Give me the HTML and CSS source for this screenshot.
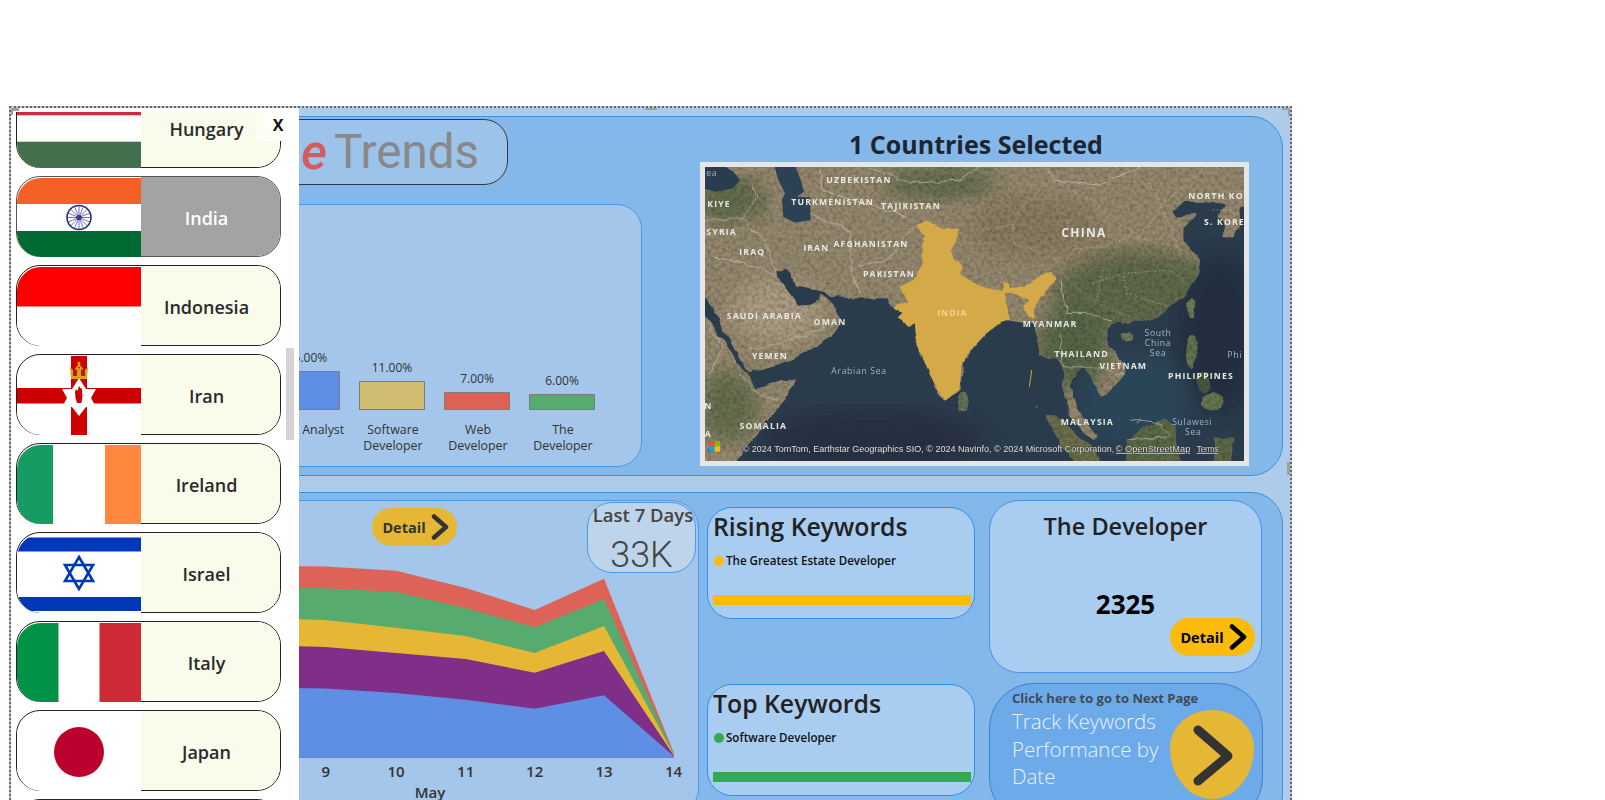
FILE: index.html
```html
<!DOCTYPE html>
<html lang="en">

<head>
    <meta charset="UTF-8">
    <meta name="viewport" content="width=device-width, initial-scale=1.0">
    <title>Google Trends Dashboard</title>
    <link rel="stylesheet" href="styles.css">
</head>

<body>

    <div class="frame">
        <span class="handle handle-top"></span>
        <span class="handle handle-right"></span>
        <span class="handle handle-left"></span>
        <span class="corner"></span>

        <section class="panel panel-upper">
            <div class="left-col">
                <div class="logo"><span class="logo-e">e</span><span class="logo-word">Trends</span></div>
                <div class="share-card">
                    <div class="share-col">
                        <div class="share-value">15.00%</div>
                        <div class="share-bar bar-blue" style="height: 39px"></div>
                        <div class="share-name">Data Analyst</div>
                    </div>
                    <div class="share-col">
                        <div class="share-value">11.00%</div>
                        <div class="share-bar bar-sand" style="height: 29px"></div>
                        <div class="share-name">Software Developer</div>
                    </div>
                    <div class="share-col">
                        <div class="share-value">7.00%</div>
                        <div class="share-bar bar-red" style="height: 18px"></div>
                        <div class="share-name">Web Developer</div>
                    </div>
                    <div class="share-col">
                        <div class="share-value">6.00%</div>
                        <div class="share-bar bar-green" style="height: 16px"></div>
                        <div class="share-name">The<br>Developer</div>
                    </div>
                </div>
            </div>
            <div class="right-col">
                <h1 class="map-title">1 Countries Selected</h1>
                <div class="map-frame">
                    <svg class="map" viewBox="15 21 1617 882" width="539" height="294">
                        <defs>
                            <polygon id="land-main" points="-20,-10 1670,-10 1670,125 1620,140 1625,190 1600,232 1565,232 1572,195 1555,165 1575,140 1540,125 1490,125 1450,125 1420,150 1435,170 1490,165 1450,205 1450,240 1500,300 1495,340 1460,400 1410,440 1370,470 1290,490 1255,480 1220,510 1225,560 1270,610 1275,650 1240,680 1205,710 1188,680 1155,620 1130,640 1110,680 1130,745 1190,835 1175,840 1110,770 1095,700 1090,640 1070,600 1020,585 1005,490 935,480 905,485 860,520 810,572 785,615 778,690 735,722 712,690 680,620 650,555 645,490 625,500 595,470 610,458 578,442 560,415 455,415 395,410 375,395 340,388 295,375 272,350 255,322 228,335 245,365 275,405 295,435 340,430 365,405 385,420 430,480 395,530 330,570 280,600 150,640 120,590 80,530 50,460 -20,370" />
                            <polygon id="land-africa" points="-20,420 60,530 115,610 150,650 165,685 225,670 285,655 270,690 230,750 190,800 130,870 100,930 -20,930" />
                            <clipPath id="land-clip">
                                <use href="#land-main" />
                                <use href="#land-africa" />
                            </clipPath>
                            <filter id="grain" filterUnits="userSpaceOnUse" x="-30" y="-30" width="1720" height="980">
                                <feTurbulence type="fractalNoise" baseFrequency="0.02" numOctaves="3" seed="3" result="wobble" />
                                <feDisplacementMap in="SourceGraphic" in2="wobble" scale="22" xChannelSelector="R" yChannelSelector="G" result="rough" />
                                <feTurbulence type="fractalNoise" baseFrequency="0.09" numOctaves="5" seed="7" />
                                <feColorMatrix type="matrix" values="0 0 0 0 0.45  0 0 0 0 0.43  0 0 0 0 0.37  1.6 0 0 0 -0.55" />
                                <feComposite in2="rough" operator="in" result="speck" />
                                <feBlend in="speck" in2="rough" mode="multiply" />
                            </filter>
                            <filter id="rough-line" filterUnits="userSpaceOnUse" x="-30" y="-30" width="1720" height="980">
                                <feTurbulence type="fractalNoise" baseFrequency="0.03" numOctaves="3" seed="11" result="wobble" />
                                <feDisplacementMap in="SourceGraphic" in2="wobble" scale="20" xChannelSelector="R" yChannelSelector="G" />
                                <feGaussianBlur stdDeviation="0.8" />
                            </filter>
                            <filter id="rough-india" filterUnits="userSpaceOnUse" x="-30" y="-30" width="1720" height="980">
                                <feTurbulence type="fractalNoise" baseFrequency="0.05" numOctaves="3" seed="5" result="wobble" />
                                <feDisplacementMap in="SourceGraphic" in2="wobble" scale="9" xChannelSelector="R" yChannelSelector="G" />
                            </filter>
                            <filter id="soft"><feGaussianBlur stdDeviation="30" /></filter>
                        </defs>

                        <rect x="15" y="21" width="1617" height="882" fill="#2a3b4c" />
                        <ellipse cx="1560" cy="520" rx="130" ry="240" fill="#232d40" filter="url(#soft)" />
                        <ellipse cx="520" cy="840" rx="330" ry="90" fill="#262f42" filter="url(#soft)" />
                        <ellipse cx="1300" cy="720" rx="170" ry="140" fill="#2b4456" filter="url(#soft)" />

                        <g filter="url(#grain)">
                            <use href="#land-main" fill="#95886f" />
                            <use href="#land-africa" fill="#968a72" />
                            <g clip-path="url(#land-clip)">
                                <ellipse cx="1320" cy="400" rx="260" ry="130" fill="#606b4c" filter="url(#soft)" />
                                <ellipse cx="1120" cy="560" rx="110" ry="130" fill="#566746" filter="url(#soft)" />
                                <ellipse cx="85" cy="740" rx="90" ry="110" fill="#667050" filter="url(#soft)" />
                                <ellipse cx="90" cy="120" rx="110" ry="70" fill="#626c4e" filter="url(#soft)" />
                                <ellipse cx="720" cy="70" rx="170" ry="50" fill="#626d50" filter="url(#soft)" />
                                <ellipse cx="230" cy="450" rx="140" ry="100" fill="#ac9c84" filter="url(#soft)" />
                                <ellipse cx="1000" cy="200" rx="190" ry="90" fill="#8a7b62" filter="url(#soft)" />
                            </g>
                            <polygon fill="#6a6f4c" points="1035,768 1070,770 1140,830 1190,880 1210,930 1140,930 1090,860" />
                            <polygon fill="#5c6b47" points="1280,850 1320,810 1390,780 1430,800 1425,850 1450,930 1280,930" />
                            <polygon fill="#5c6b47" points="1540,835 1600,840 1590,930 1550,930" />
                            <ellipse cx="1280" cy="527" rx="20" ry="14" fill="#6e7a55" />
                            <ellipse cx="1473" cy="445" rx="11" ry="30" fill="#6e7a55" />
                            <ellipse cx="1475" cy="575" rx="18" ry="46" fill="#66754e" />
                            <ellipse cx="1510" cy="665" rx="22" ry="32" fill="#47583f" />
                            <ellipse cx="1535" cy="725" rx="32" ry="28" fill="#66754e" />
                            <ellipse cx="788" cy="727" rx="17" ry="32" fill="#68735c" />
                        </g>

                        <polygon fill="#2a3d50" points="5,10 60,10 100,35 120,60 100,85 50,95 5,85" />
                        <polygon fill="#2b4254" points="222,15 285,15 300,55 312,95 290,110 330,112 332,180 285,188 250,170 246,120 255,100 235,60" />

                        <g class="borders" filter="url(#rough-line)">
                            <polyline points="15,180 130,175 170,110 160,80" />
                            <polyline points="130,180 190,240 230,330" />
                            <polyline points="40,290 130,310 225,345" />
                            <polyline points="360,21 365,90 460,120 620,170" />
                            <polyline points="330,160 450,210 450,330 480,400" />
                            <polyline points="470,320 560,300 640,200" />
                            <polyline points="150,570 300,530 370,500" />
                            <polyline points="120,640 160,690 235,720" />
                            <polyline points="500,21 640,70 780,60 840,21" />
                            <polyline points="15,470 70,560 30,640" />
                            <polyline points="1040,21 1060,60 1190,75 1320,25" />
                            <polyline points="1080,360 1100,460 1160,460 1230,480" />
                            <polyline points="1080,520 1090,620 1160,620 1270,640" />
                            <polyline points="1290,780 1380,790 1410,830 1280,840" />
                        </g>
                        <g class="provinces" filter="url(#rough-india)">
                            <polyline points="810,215 940,195 940,250 1060,290 1095,350 1150,400 1210,440 1290,470" />
                            <polyline points="940,195 960,150 1050,60 1190,130 1220,170 1320,230 1410,110 1510,30" />
                            <polyline points="1090,270 1210,260 1290,230 1430,260 1490,300" />
                            <polyline points="1180,370 1270,340 1410,330 1460,370" />
                            <polyline points="1270,340 1280,400 1410,440" />
                            <polyline points="1210,320 1190,420" />
                            <polyline points="1350,70 1410,200 1450,300" />
                            <polyline points="1120,270 1100,180" />
                            <polyline points="1540,150 1600,150" />
                        </g>

                        <polygon class="india" filter="url(#rough-india)" points="648,195 680,182 705,195 730,208 778,205 770,240 752,272 762,298 790,318 780,338 812,365 860,385 910,392 915,365 925,372 930,385 975,378 1025,345 1050,335 1072,358 1050,378 1022,410 1005,440 1000,478 985,468 970,440 988,420 960,408 935,398 915,400 918,425 930,478 905,485 860,520 810,572 785,615 778,690 735,722 712,690 680,620 650,555 645,490 625,500 595,470 608,458 580,445 590,432 625,428 598,380 640,360 668,310 665,260 672,228" />
                        <polyline class="andaman" points="995,630 992,655 988,680" />
                        <polyline class="andaman" points="1008,738 1012,742" />

                        <g class="map-labels">
                            <text x="477" y="62">UZBEKISTAN</text>
                            <text x="57" y="134">KIYE</text>
                            <text x="398" y="128">TURKMENISTAN</text>
                            <text x="633" y="140">TAJIKISTAN</text>
                            <text x="65" y="218">SYRIA</text>
                            <text x="157" y="278">IRAQ</text>
                            <text x="349" y="265">IRAN</text>
                            <text x="513" y="255">AFGHANISTAN</text>
                            <text x="567" y="344">PAKISTAN</text>
                            <text x="193" y="470">SAUDI ARABIA</text>
                            <text x="390" y="488">OMAN</text>
                            <text x="210" y="590">YEMEN</text>
                            <text x="25" y="740">N</text>
                            <text x="25" y="825">A</text>
                            <text x="190" y="800">SOMALIA</text>
                            <text class="label-big" x="1152" y="221">CHINA</text>
                            <text class="label-start" x="1465" y="110">NORTH KO</text>
                            <text class="label-start" x="1512" y="188">S. KORE</text>
                            <text x="1050" y="493">MYANMAR</text>
                            <text x="1145" y="584">THAILAND</text>
                            <text x="1270" y="620">VIETNAM</text>
                            <text x="1503" y="650">PHILIPPINES</text>
                            <text x="1162" y="788">MALAYSIA</text>
                        </g>
                        <g class="map-seas">
                            <text x="35" y="40">ea</text>
                            <text x="477" y="635">Arabian Sea</text>
                            <text x="1374" y="521">South</text>
                            <text x="1374" y="551">China</text>
                            <text x="1374" y="581">Sea</text>
                            <text class="label-start" x="1582" y="587">Phi</text>
                            <text x="1477" y="788">Sulawesi</text>
                            <text x="1480" y="818">Sea</text>
                        </g>
                        <text class="india-label" x="757" y="462">INDIA</text>

                        <rect x="28" y="843" width="16" height="16" fill="#f25022" />
                        <rect x="44" y="843" width="16" height="16" fill="#7fba00" />
                        <rect x="28" y="859" width="16" height="16" fill="#00a4ef" />
                        <rect x="44" y="859" width="16" height="16" fill="#ffb900" />
                        <text class="attribution" x="128" y="868" textLength="1115" lengthAdjust="spacingAndGlyphs">© 2024 TomTom, Earthstar Geographics SIO, © 2024 NavInfo, © 2024 Microsoft Corporation,</text>
                        <text class="attribution attribution-link" x="1247" y="868" textLength="224" lengthAdjust="spacingAndGlyphs">© OpenStreetMap</text>
                        <text class="attribution attribution-link" x="1490" y="868" textLength="65" lengthAdjust="spacingAndGlyphs">Terms</text>
                    </svg>
                </div>
            </div>
        </section>

        <section class="panel panel-lower">
            <div class="trend-card">
                <svg class="trend-chart" viewBox="22 556 676 250" width="676" height="250">
                    <polygon fill="#dd6257" points="290,566 325.7,566.5 396,570.7 465.7,588 534.7,610 604,578.7 673.5,752 673.5,757.7 290,757.7" />
                    <polygon fill="#57ab6f" points="290,588 325.7,588.3 396,592 465.7,608 534.7,627.3 604,599 673.5,753 673.5,757.7 290,757.7" />
                    <polygon fill="#e6b735" points="290,619 325.7,620 396,627.7 465.7,636 534.7,653 604,626 673.5,754 673.5,757.7 290,757.7" />
                    <polygon fill="#7f2f88" points="290,646 325.7,647 396,653 465.7,659 534.7,672.7 604,651 673.5,755 673.5,757.7 290,757.7" />
                    <polygon fill="#5f8fe4" points="290,688 325.7,688.5 396,693 465.7,699.7 534.7,708.7 604,695.3 673.5,756 673.5,757.7 290,757.7" />
                    <g class="trend-axis">
                        <text x="325.7" y="777">9</text>
                        <text x="396" y="777">10</text>
                        <text x="465.7" y="777">11</text>
                        <text x="534.7" y="777">12</text>
                        <text x="604" y="777">13</text>
                        <text x="673.5" y="777">14</text>
                        <text x="430" y="798">May</text>
                    </g>
                </svg>
                <a class="detail detail-yellow detail-trend">Detail
                    <svg class="chevron" viewBox="0 0 18 26" width="18" height="26">
                        <polyline points="3,2.5 15,13 3,23.5" />
                    </svg>
                </a>
                <div class="days-card">
                    <div class="days-label">Last 7 Days</div>
                    <div class="days-value">33K</div>
                </div>
            </div>

            <div class="keyword-col">
                <div class="keyword-card">
                    <h2 class="card-title">Rising Keywords</h2>
                    <div class="legend"><span class="dot dot-amber"></span>The Greatest Estate Developer</div>
                    <div class="keyword-bar bar-amber"></div>
                </div>
                <div class="keyword-card">
                    <h2 class="card-title">Top Keywords</h2>
                    <div class="legend"><span class="dot dot-leaf"></span>Software Developer</div>
                    <div class="keyword-bar bar-leaf"></div>
                </div>
            </div>

            <div class="action-col">
                <div class="developer-card">
                    <h2 class="card-title developer-title">The Developer</h2>
                    <div class="developer-count">2325</div>
                    <a class="detail detail-amber">Detail
                        <svg class="chevron chevron-black" viewBox="0 0 18 26" width="18" height="26">
                            <polyline points="3,2.5 15,13 3,23.5" />
                        </svg>
                    </a>
                </div>
                <div class="next-card">
                    <div class="next-hint">Click here to go to Next Page</div>
                    <div class="next-row">
                        <div class="next-text">Track Keywords Performance by Date</div>
                        <div class="next-button">
                            <svg viewBox="0 0 44 64" width="44" height="64">
                                <polyline points="8,7 38,33 8,58" />
                            </svg>
                        </div>
                    </div>
                </div>
            </div>
        </section>

        <aside class="slicer">
            <span class="slicer-corner"></span>
            <div class="slicer-list">
                <div class="country first">
                    <svg class="flag" viewBox="0 0 124 79" preserveAspectRatio="none">
                        <rect width="124" height="79" fill="#fff" />
                        <rect width="124" height="26.3" fill="#cd2a3e" />
                        <rect y="52.7" width="124" height="26.3" fill="#436f4d" />
                    </svg>
                    <div class="country-name">Hungary</div>
                </div>
                <div class="country selected">
                    <svg class="flag" viewBox="0 0 124 79" preserveAspectRatio="none">
                        <rect width="124" height="79" fill="#fff" />
                        <rect width="124" height="26" fill="#f46027" />
                        <rect y="53" width="124" height="26" fill="#006a33" />
                        <circle cx="62" cy="39.5" r="12" fill="#fff" stroke="#2a2a7e" stroke-width="1.6" />
                        <circle cx="62" cy="39.5" r="2.6" fill="#2a2a7e" />
                        <g stroke="#3b3b8c" stroke-width="0.7">
                            <line x1="50" y1="39.5" x2="74" y2="39.5" />
                            <line x1="62" y1="27.5" x2="62" y2="51.5" />
                            <line x1="53.5" y1="31" x2="70.5" y2="48" />
                            <line x1="70.5" y1="31" x2="53.5" y2="48" />
                            <line x1="51" y1="35" x2="73" y2="44" />
                            <line x1="73" y1="35" x2="51" y2="44" />
                            <line x1="57.5" y1="28.5" x2="66.5" y2="50.5" />
                            <line x1="66.5" y1="28.5" x2="57.5" y2="50.5" />
                        </g>
                    </svg>
                    <div class="country-name">India</div>
                </div>
                <div class="country">
                    <svg class="flag" viewBox="0 0 124 79" preserveAspectRatio="none">
                        <rect width="124" height="79" fill="#fff" />
                        <rect width="124" height="39.5" fill="#ff0000" />
                    </svg>
                    <div class="country-name">Indonesia</div>
                </div>
                <div class="country">
                    <svg class="flag" viewBox="0 0 124 79" preserveAspectRatio="none">
                        <rect width="124" height="79" fill="#fff" />
                        <rect x="54" width="16" height="79" fill="#cc0000" />
                        <rect y="32" width="124" height="15.5" fill="#cc0000" />
                        <polygon fill="#fff" points="62,22 69,33 79,33 74,42 79,51 69,51 62,60 55,51 45,51 50,42 45,33 55,33" />
                        <path fill="#cc0000" d="M58,36 L59,33 L60.5,35 L62,30 L63.5,32 L65,33 L65.5,40 L64.5,47 L60,47 L58.5,42 Z" />
                        <path fill="#d8a417" d="M53,11 L57,15 L60,9.5 L62,13 L64,9.5 L67,15 L71,11 L70,23 L54,23 Z" />
                        <path fill="#b01c1c" d="M56,14 L60,13.5 L60,20 L56,20 Z M64,13.5 L68,14 L68,20 L64,20 Z" />
                        <rect x="60.7" y="6" width="2.6" height="5" fill="#d8a417" />
                    </svg>
                    <div class="country-name">Iran</div>
                </div>
                <div class="country">
                    <svg class="flag" viewBox="0 0 124 79" preserveAspectRatio="none">
                        <rect width="124" height="79" fill="#fff" />
                        <rect width="36" height="79" fill="#169b62" />
                        <rect x="88" width="36" height="79" fill="#ff883e" />
                    </svg>
                    <div class="country-name">Ireland</div>
                </div>
                <div class="country">
                    <svg class="flag" viewBox="0 0 124 79" preserveAspectRatio="none">
                        <rect width="124" height="79" fill="#fff" />
                        <rect y="3.5" width="124" height="14" fill="#0038b8" />
                        <rect y="63" width="124" height="14" fill="#0038b8" />
                        <g fill="none" stroke="#0038b8" stroke-width="2.6">
                            <polygon points="62,23 76,47 48,47" />
                            <polygon points="62,55 48,31 76,31" />
                        </g>
                    </svg>
                    <div class="country-name">Israel</div>
                </div>
                <div class="country">
                    <svg class="flag" viewBox="0 0 124 79" preserveAspectRatio="none">
                        <rect width="124" height="79" fill="#fff" />
                        <rect width="41.5" height="79" fill="#009246" />
                        <rect x="82.5" width="41.5" height="79" fill="#ce2b37" />
                    </svg>
                    <div class="country-name">Italy</div>
                </div>
                <div class="country">
                    <svg class="flag" viewBox="0 0 124 79" preserveAspectRatio="none">
                        <rect width="124" height="79" fill="#fff" />
                        <circle cx="62" cy="40" r="25" fill="#bc002d" />
                    </svg>
                    <div class="country-name">Japan</div>
                </div>
                <div class="country"></div>
            </div>
            <span class="slicer-thumb"></span>
            <button class="slicer-close">X</button>
        </aside>
    </div>

</body>

</html>
```

FILE: styles.css
```css
* {
    box-sizing: border-box;
}

html,
body {
    height: 800px;
    margin: 0;
    overflow: hidden;
    background-color: #fff;
}

body {
    font-family: "Open Sans", "Noto Sans", sans-serif;
    color: #222;
}

h1,
h2 {
    margin: 0;
    font-weight: 600;
}

.frame {
    position: relative;
    width: 1283px;
    height: 694px;
    margin: 106px 0 0 9px;
    padding: 8px 7px 0 9px;
    border: 2px dotted #666;
    border-bottom: none;
    background-color: #aecce9;
    overflow: hidden;
}

.handle {
    position: absolute;
    background-color: #a0a0a0;
}

.handle-top {
    top: 0;
    left: 634px;
    width: 12px;
    height: 2px;
}

.handle-right {
    top: 354px;
    right: 0;
    width: 3px;
    height: 13px;
}

.handle-left {
    top: 353px;
    left: 0;
    width: 3px;
    height: 12px;
}

.corner {
    position: absolute;
    top: 0;
    right: 0;
    width: 8px;
    height: 8px;
    border-top: 2px solid #a0a0a0;
    border-right: 2px solid #a0a0a0;
}

.panel {
    border: 1px solid #3f8fdc;
    border-radius: 32px;
    background-color: #84b8ea;
}

.panel-upper {
    display: flex;
    justify-content: space-between;
    height: 360px;
    padding: 2px 33px 0 0;
}

.panel-lower {
    display: flex;
    height: 335px;
    margin-top: 16px;
    padding-top: 7px;
}

/* upper left: logo and bars */
.left-col {
    width: 621px;
}

.logo {
    display: flex;
    align-items: center;
    justify-content: flex-end;
    width: 358px;
    height: 66px;
    margin-left: 129px;
    padding-right: 28px;
    border: 1px solid #2f3a48;
    border-radius: 24px;
    background-color: #9cc3ea;
    font-family: Roboto, sans-serif;
    font-size: 47.5px;
}

.logo-e {
    margin-right: 7px;
    color: #d55b5f;
    font-size: 50px;
    font-style: italic;
    font-weight: 500;
}

.logo-word {
    color: #888;
}

.share-card {
    display: flex;
    align-items: flex-end;
    justify-content: flex-end;
    height: 263px;
    margin-top: 19px;
    padding: 0 37px 12px 0;
    border: 1px solid #4898e8;
    border-radius: 25px;
    background-color: #a4c6ea;
}

.share-col {
    width: 85px;
    text-align: center;
    font-size: 12px;
    font-weight: 500;
    color: #333;
}

.share-value {
    margin-bottom: 5px;
    padding-left: 1px;
    line-height: 16px;
}

.share-bar {
    width: 66px;
    margin: 0 auto;
    border: 1.5px solid #7d7d80;
}

.share-name {
    height: 32px;
    margin-top: 12px;
    padding-left: 3px;
    line-height: 16px;
    font-size: 12.4px;
    white-space: nowrap;
}

.share-col:not(:first-child) .share-name {
    white-space: normal;
}

.bar-blue {
    background-color: #5f8fe4;
}

.bar-sand {
    background-color: #cfbc71;
}

.bar-red {
    background-color: #de6156;
}

.bar-green {
    background-color: #57ab6f;
}

/* upper right: map */
.right-col {
    width: 549px;
}

.map-title {
    height: 35px;
    margin-top: 8px;
    padding-left: 3px;
    line-height: 35px;
    text-align: center;
    font-size: 25px;
    font-weight: 700;
    color: #1e2530;
}

.map-frame {
    width: 549px;
    height: 304px;
    border: 5px solid #e6e6e6;
}

.map {
    display: block;
}

.borders polyline {
    fill: none;
    stroke: #d5d2c6;
    stroke-width: 3;
    opacity: 0.6;
}

.provinces polyline {
    fill: none;
    stroke: #e8e6d8;
    stroke-width: 2.5;
    stroke-dasharray: 3 7;
    opacity: 0.85;
}

.india {
    fill: #d3aa47;
}

.andaman {
    fill: none;
    stroke: #d6a52c;
    stroke-width: 3;
}

.map-labels text {
    fill: #e9e9e4;
    font-family: "Open Sans", sans-serif;
    font-size: 26px;
    font-weight: 700;
    letter-spacing: 3.5px;
    text-anchor: middle;
    dominant-baseline: middle;
}

.map-labels .label-big {
    font-size: 36px;
    letter-spacing: 4px;
}

.map-labels .label-start,
.map-seas .label-start {
    text-anchor: start;
}

.map-seas text {
    fill: #a2b4c9;
    font-family: "Open Sans", sans-serif;
    font-size: 26px;
    letter-spacing: 2px;
    text-anchor: middle;
    dominant-baseline: middle;
}

.india-label {
    fill: #efd78f;
    font-family: "Open Sans", sans-serif;
    font-size: 26px;
    font-weight: 700;
    letter-spacing: 3px;
    text-anchor: middle;
    dominant-baseline: middle;
}

.attribution {
    fill: #e2e2e2;
    font-family: "Liberation Sans", sans-serif;
    font-size: 28px;
    dominant-baseline: middle;
    paint-order: stroke;
    stroke: #222;
    stroke-width: 2px;
}

.attribution-link {
    text-decoration: underline;
}

/* lower left: area chart */
.trend-card {
    position: relative;
    width: 678px;
    height: 316px;
    padding-top: 55px;
    border: 1px solid #4a9ae8;
    border-radius: 28px;
    background-color: #a4c6ea;
}

.trend-chart {
    display: block;
}

.trend-axis text {
    fill: #333;
    font-size: 15px;
    font-weight: 600;
    text-anchor: middle;
}

.detail {
    display: flex;
    align-items: center;
    justify-content: center;
    gap: 5px;
    width: 85px;
    height: 38px;
    padding-left: 2px;
    border-radius: 19px;
    font-size: 14.5px;
    font-weight: 700;
    color: #333;
}

.detail-yellow {
    background-color: #e6b735;
}

.detail-amber {
    align-self: flex-end;
    margin: -4px 6px 0 0;
    background-color: #fabb0a;
    color: #000;
}

.detail-trend {
    position: absolute;
    top: 7px;
    left: 350px;
}

.chevron polyline {
    fill: none;
    stroke: #333;
    stroke-width: 4.5;
    stroke-linecap: round;
    stroke-linejoin: round;
}

.chevron-black polyline {
    stroke: #000;
}

.days-card {
    position: absolute;
    top: 1px;
    right: 2px;
    width: 109px;
    height: 71px;
    border: 1px solid #4a9ae8;
    border-radius: 25px;
    background-color: #bed4ea;
    text-align: center;
    color: #444;
}

.days-label {
    margin-top: -1px;
    padding-left: 3px;
    line-height: 26px;
    font-size: 18.5px;
    font-weight: 600;
    white-space: nowrap;
}

.days-value {
    margin-top: 3px;
    line-height: 48px;
    font-family: Roboto, sans-serif;
    font-size: 36px;
    font-weight: 300;
}

/* lower middle: keywords */
.keyword-col {
    display: flex;
    flex-direction: column;
    gap: 65px;
    width: 268px;
    margin: 7px 0 0 8px;
}

.keyword-card {
    height: 112px;
    padding: 2px 3px 0 5px;
    border: 1px solid #2a90f2;
    border-radius: 25px;
    background-color: #a9cdf1;
}

.card-title {
    line-height: 32px;
    font-size: 24.8px;
    color: #222;
}

.developer-title {
    font-size: 23.5px;
}

.legend {
    display: flex;
    align-items: center;
    gap: 2px;
    margin-top: 11px;
    line-height: 16px;
    font-size: 11.6px;
    font-weight: 600;
    color: #111;
}

.dot {
    width: 10px;
    height: 10px;
    margin-left: 1px;
    border-radius: 50%;
}

.dot-amber {
    background-color: #fbbc04;
}

.dot-leaf {
    background-color: #34a853;
}

.keyword-bar {
    height: 10px;
    margin-top: 26px;
}

.bar-amber {
    background-color: #fbbc04;
}

.bar-leaf {
    background-color: #34a853;
}

/* lower right: developer count and next page */
.action-col {
    display: flex;
    flex-direction: column;
    gap: 10px;
    width: 274px;
    margin-left: 14px;
}

.developer-card {
    display: flex;
    flex-direction: column;
    align-items: center;
    width: 273px;
    height: 173px;
    padding-top: 9px;
    border: 1px solid #4a90e8;
    border-radius: 30px;
    background-color: #a9cdf1;
}

.developer-count {
    margin-top: 44px;
    line-height: 36px;
    font-size: 26px;
    font-weight: 700;
    color: #000;
}

.next-card {
    height: 140px;
    padding: 5px 0 0 22px;
    border: 1px solid #3f80c8;
    border-radius: 45px;
    background-color: #6daae9;
}

.next-hint {
    line-height: 18px;
    font-size: 13px;
    font-weight: 700;
    color: #3f4a55;
}

.next-row {
    display: flex;
    margin-top: 1px;
}

.next-text {
    width: 158px;
    line-height: 27.6px;
    font-size: 20.5px;
    font-weight: 300;
    color: #e8f2fb;
}

.next-button {
    display: flex;
    align-items: center;
    justify-content: center;
    width: 84px;
    height: 89px;
    margin-top: 2px;
    border-radius: 50% / 42% 42% 58% 58%;
    background-color: #e6b735;
}

.next-button polyline {
    fill: none;
    stroke: #333;
    stroke-width: 9;
    stroke-linecap: round;
    stroke-linejoin: round;
}

/* country slicer over the report */
.slicer {
    position: absolute;
    top: 0;
    left: 0;
    width: 288px;
    height: 692px;
    padding-top: 4px;
    background-color: #fff;
}

.slicer-corner {
    position: absolute;
    top: 0;
    left: 0;
    width: 8px;
    height: 7px;
    border-top: 3px solid #a0a0a0;
    border-left: 2px solid #a0a0a0;
}

.slicer-list {
    height: 688px;
    padding-left: 5px;
    overflow: hidden;
}

.country {
    display: flex;
    width: 265px;
    height: 81px;
    margin-bottom: 8px;
    border: 1px solid #222;
    border-radius: 24px;
    background-color: #fff;
}

.country.first {
    margin-top: -25px;
}

.flag {
    flex: none;
    width: 124px;
    height: 79px;
    margin: 1px 0 -1px;
    border-radius: 24px 0 0 24px;
}

.country-name {
    display: flex;
    flex: 1;
    align-items: center;
    justify-content: center;
    padding: 2px 8px 0 0;
    border-radius: 0 23px 23px 0;
    background-color: #f9fceb;
    font-size: 18px;
    font-weight: 600;
    color: #2a2a2a;
}

.country.selected {
    border-color: #555;
}

.country.selected .country-name {
    background-color: #a3a3a3;
    color: #fff;
}

.slicer-thumb {
    position: absolute;
    top: 240px;
    left: 275px;
    width: 8px;
    height: 92px;
    background-color: #d4d4d4;
}

.slicer-close {
    position: absolute;
    top: 1px;
    left: 246px;
    width: 28px;
    height: 32px;
    padding: 0 0 0 14px;
    border: none;
    background-color: #fdfef7;
    font-family: "Open Sans", sans-serif;
    font-size: 16px;
    font-weight: 700;
    color: #111;
}
```
